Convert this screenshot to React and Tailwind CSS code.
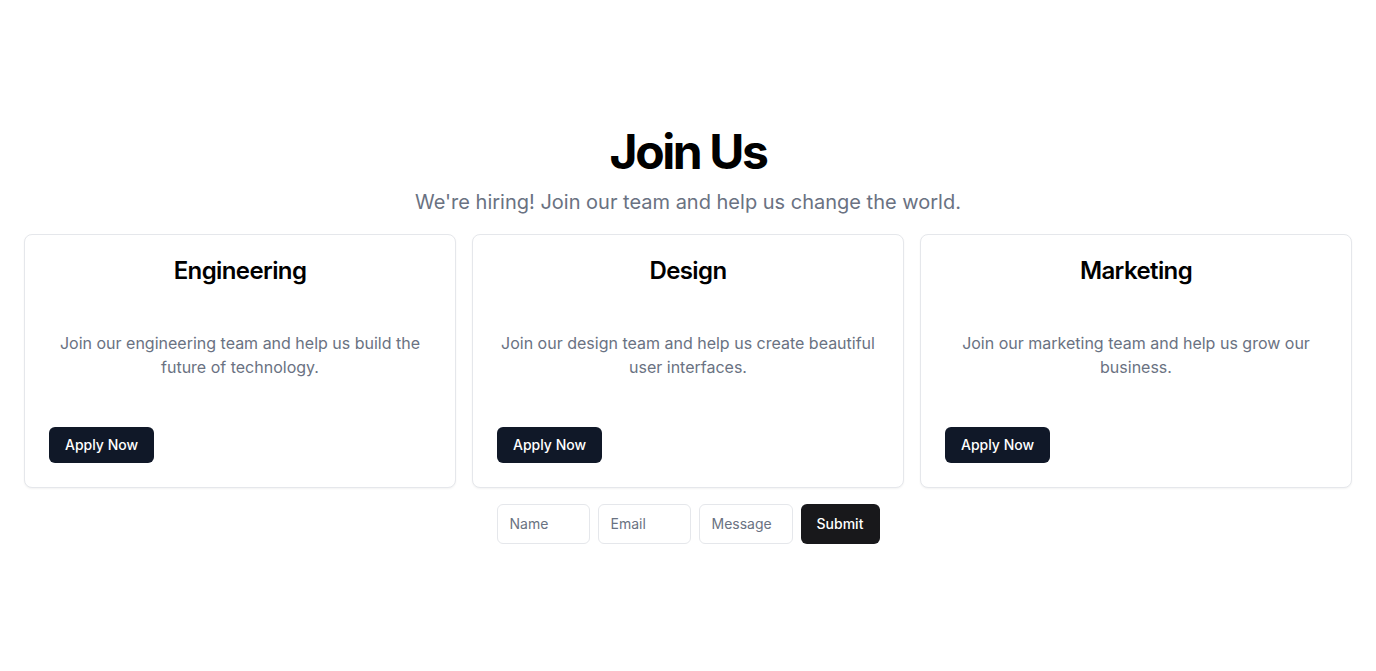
const JOBS = [
  {
    title: 'Engineering',
    text: 'Join our engineering team and help us build the future of technology.',
  },
  {
    title: 'Design',
    text: 'Join our design team and help us create beautiful user interfaces.',
  },
  {
    title: 'Marketing',
    text: 'Join our marketing team and help us grow our business.',
  },
]

export default function App() {
  return (
    <div className="min-h-screen flex flex-col items-center justify-center bg-white px-6 font-['Inter',sans-serif]">
      <h1 className="text-5xl leading-none font-bold tracking-tighter text-black">Join Us</h1>
      <p className="mt-3 text-xl text-gray-500">
        We're hiring! Join our team and help us change the world.
      </p>

      <div className="mt-[18px] grid w-full grid-cols-3 gap-4">
        {JOBS.map((job) => (
          <div key={job.title} className="flex flex-col rounded-lg border border-gray-200 bg-white shadow-xs">
            <div className="p-6">
              <h2 className="text-center text-2xl leading-none font-semibold tracking-tight text-black">
                {job.title}
              </h2>
            </div>
            <div className="p-6">
              <p className="text-center text-base text-gray-500">{job.text}</p>
            </div>
            <div className="p-6">
              <button className="h-9 rounded-md bg-gray-900 px-4 text-sm font-medium text-white">
                Apply Now
              </button>
            </div>
          </div>
        ))}
      </div>

      {/* Form */}
      <form className="mt-4 flex gap-2" onSubmit={(e) => e.preventDefault()}>
        <input
          placeholder="Name"
          className="h-10 w-[93px] rounded-md border border-gray-200 px-3 text-sm outline-none placeholder:text-gray-500"
        />
        <input
          placeholder="Email"
          className="h-10 w-[93px] rounded-md border border-gray-200 px-3 text-sm outline-none placeholder:text-gray-500"
        />
        <input
          placeholder="Message"
          className="h-10 w-[94px] rounded-md border border-gray-200 px-3 text-sm outline-none placeholder:text-gray-500"
        />
        <button type="submit" className="h-10 w-[79px] rounded-md bg-zinc-900 text-sm font-medium text-white">
          Submit
        </button>
      </form>
    </div>
  )
}
